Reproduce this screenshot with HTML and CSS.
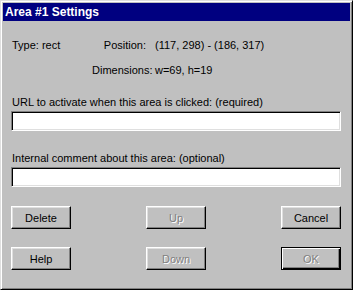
FILE: index.html
```html
<html>
<head>
<link rel="stylesheet" href="styles.css">
</head>
<body>
<div class="dialog">
  <div class="titlebar">Area #1 Settings</div>
  <div class="content">
    <div class="info">
      <span class="type">Type: rect</span>
      <span class="lbl pos">Position:</span>
      <span class="val">(117, 298) - (186, 317)</span>
      <span></span>
      <span class="lbl">Dimensions:</span>
      <span class="val">w=69, h=19</span>
    </div>

    <div class="field">
      <label class="flabel">URL to activate when this area is clicked: (required)</label>
      <input class="textbox" type="text">
    </div>
    <div class="field">
      <label class="flabel">Internal comment about this area: (optional)</label>
      <input class="textbox" type="text">
    </div>

    <div class="buttons">
      <div class="btnrow">
        <button class="btn">Delete</button>
        <button class="btn" disabled>Up</button>
        <button class="btn">Cancel</button>
      </div>
      <div class="btnrow">
        <button class="btn">Help</button>
        <button class="btn" disabled>Down</button>
        <button class="btn default" disabled>OK</button>
      </div>
    </div>
  </div>
</div>
</body>
</html>
```

FILE: styles.css
```css
body {
  margin: 0;
  background: #c0c0c0;
  font: 11px "Liberation Sans", Arial, sans-serif;
  color: #000;
}

.dialog {
  box-sizing: border-box;
  width: 353px;
  height: 290px;
  background: #c0c0c0;
  border: 1px solid;
  border-color: #dfdfdf #000 #000 #dfdfdf;
  box-shadow: inset 1px 1px #fff, inset -1px -1px #808080;
  padding: 2px;
  display: flex;
  flex-direction: column;
}

.titlebar {
  height: 18px;
  line-height: 18px;
  background: #000080;
  color: #fff;
  font-weight: bold;
  font-size: 12px;
  padding-left: 2px;
}

.content {
  padding: 17px 9px 0 8px;
  display: flex;
  flex-direction: column;
}

.info {
  display: grid;
  grid-template-columns: 80px 57px auto;
  row-gap: 11px;
  line-height: 14px;
  padding-left: 1px;
}

.info .lbl {
  text-align: right;
}

.info .pos {
  padding-right: 3px;
}

.info .val {
  padding-left: 6px;
}

.field {
  display: flex;
  flex-direction: column;
  margin-top: 18px;
}

.field + .field {
  margin-top: 20px;
}

.flabel {
  line-height: 14px;
  padding-left: 1px;
  margin-bottom: 2px;
}

.textbox {
  box-sizing: border-box;
  width: 330px;
  height: 20px;
  margin: 0;
  background: #fff;
  border: 1px solid;
  border-color: #808080 #fff #fff #808080;
  box-shadow: inset 1px 1px #000, inset -1px -1px #dfdfdf;
  padding: 2px 3px;
  font: inherit;
  outline: none;
}

.buttons {
  display: flex;
  flex-direction: column;
  gap: 18px;
  margin-top: 19px;
}

.btnrow {
  display: flex;
  justify-content: space-between;
}

.btn {
  box-sizing: border-box;
  width: 60px;
  height: 23px;
  margin: 0;
  padding: 0;
  background: #c0c0c0;
  border: 1px solid;
  border-color: #fff #000 #000 #fff;
  box-shadow: inset -1px -1px #808080, inset 1px 1px #dfdfdf;
  font: inherit;
  color: #000;
}

.btn:disabled {
  color: #808080;
  text-shadow: 1px 1px #fff;
}

.btn.default {
  border: 1px solid #000;
  box-shadow: inset 1px 1px #fff, inset -1px -1px #000, inset -2px -2px #808080;
}
```
